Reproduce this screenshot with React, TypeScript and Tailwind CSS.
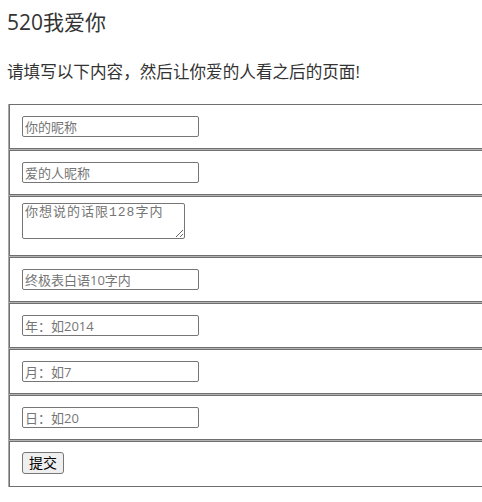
import React from "react";

const fields = [
  { name: "nick", placeholder: "你的昵称" },
  { name: "lover", placeholder: "爱的人昵称" },
];

const dateFields = [
  { name: "words", placeholder: "终极表白语10字内" },
  { name: "year", placeholder: "年：如2014" },
  { name: "month", placeholder: "月：如7" },
  { name: "day", placeholder: "日：如20" },
];

const inputCls =
  "w-[177px] h-[21px] border border-[#767676] rounded-[2px] px-[2px] text-[13px] text-black placeholder:text-[#757575] outline-none font-['Open_Sans','Noto_Sans_CJK_SC',sans-serif]";

const Row: React.FC<{ children: React.ReactNode; className?: string }> = ({ children, className }) => (
  <div className={`bg-white border-y border-l border-[#6f6f6f] pl-[12px] ${className ?? "pt-[11px] pb-[11px]"}`}>
    {children}
  </div>
);

export default function App() {
  return (
    <div className="w-[482px] h-[502px] overflow-hidden bg-white text-[#333] font-['Open_Sans','Noto_Sans_CJK_SC',sans-serif]">
      <h3 className="pl-[7px] pt-[8px] text-[21px] leading-[28px] font-normal">520我爱你</h3>
      <p className="pl-[7px] mt-[24px] text-[16.6px] leading-[24px]">请填写以下内容，然后让你爱的人看之后的页面!</p>
      <form className="ml-[8px] mt-[20px] w-[530px] flex flex-col gap-px bg-[#b4b4b4] border-l border-[#a8a8a8]">
        {fields.map((f) => (
          <Row key={f.name}>
            <input className={`${inputCls} block`} name={f.name} placeholder={f.placeholder} />
          </Row>
        ))}
        <Row className="pt-[6px] pb-[16px]">
          <textarea
            className="block w-[163px] h-[36px] border border-[#767676] rounded-[2px] px-[2px] pt-[1px] text-[13px] leading-[16px] placeholder:text-[#757575] tracking-[1px] font-['Liberation_Mono','Noto_Sans_CJK_SC',monospace]"
            name="say"
            placeholder="你想说的话限128字内"
          />
        </Row>
        {dateFields.map((f) => (
          <Row key={f.name}>
            <input className={`${inputCls} block`} name={f.name} placeholder={f.placeholder} />
          </Row>
        ))}
        <Row className="pt-[10px] pb-[12px]">
          <button
            type="button"
            className="block w-[42px] h-[22px] bg-[#efefef] border border-[#767676] rounded-[3px] text-[14px] leading-[20px] text-black"
          >
            提交
          </button>
        </Row>
      </form>
    </div>
  );
}
